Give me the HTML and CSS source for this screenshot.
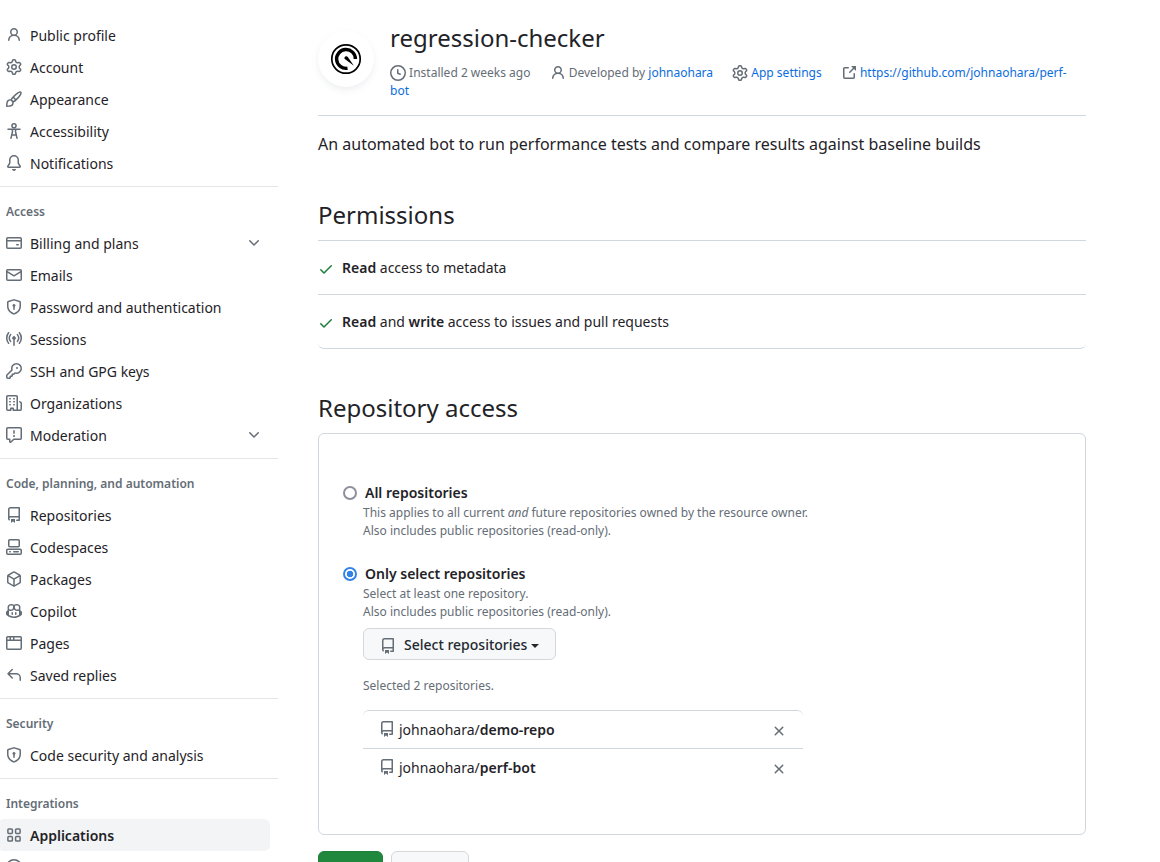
FILE: index.html
```html
<!DOCTYPE html>
<html lang="en">
<head>
<meta charset="utf-8">
<title>Installed GitHub App - regression-checker</title>
<link rel="stylesheet" href="styles.css">
</head>
<body>
<svg class="sprite" aria-hidden="true">
  <symbol id="person" viewBox="0 0 16 16"><path d="M10.561 8.073a6.005 6.005 0 0 1 3.432 5.142.75.75 0 1 1-1.498.07 4.5 4.5 0 0 0-8.99 0 .75.75 0 0 1-1.498-.07 6.004 6.004 0 0 1 3.431-5.142 3.999 3.999 0 1 1 5.123 0ZM10.5 5a2.5 2.5 0 1 0-5 0 2.5 2.5 0 0 0 5 0Z"/></symbol>
  <symbol id="gear" viewBox="0 0 16 16"><path d="M8 0a8.2 8.2 0 0 1 .701.031C9.444.095 9.99.645 10.16 1.29l.288 1.107c.018.066.079.158.212.224.231.114.454.243.668.386.123.082.233.09.299.071l1.103-.303c.644-.176 1.392.021 1.82.63.27.385.506.792.704 1.218.315.675.111 1.422-.364 1.891l-.814.806c-.049.048-.098.147-.088.294.016.257.016.515 0 .772-.01.147.038.246.088.294l.814.806c.475.469.679 1.216.364 1.891a7.977 7.977 0 0 1-.704 1.217c-.428.61-1.176.807-1.82.63l-1.102-.302c-.067-.019-.177-.011-.3.071a5.909 5.909 0 0 1-.668.386c-.133.066-.194.158-.211.224l-.29 1.106c-.168.646-.715 1.196-1.458 1.26a8.006 8.006 0 0 1-1.402 0c-.743-.064-1.289-.614-1.458-1.26l-.289-1.106c-.018-.066-.079-.158-.212-.224a5.738 5.738 0 0 1-.668-.386c-.123-.082-.233-.09-.299-.071l-1.103.303c-.644.176-1.392-.021-1.82-.63a8.12 8.12 0 0 1-.704-1.218c-.315-.675-.111-1.422.363-1.891l.815-.806c.05-.048.098-.147.088-.294a6.214 6.214 0 0 1 0-.772c.01-.147-.038-.246-.088-.294l-.815-.806C.635 6.045.431 5.298.746 4.623a7.92 7.92 0 0 1 .704-1.217c.428-.61 1.176-.807 1.82-.63l1.102.302c.067.019.177.011.3-.071.214-.143.437-.272.668-.386.133-.066.194-.158.211-.224l.29-1.106C6.009.645 6.556.095 7.299.03 7.53.01 7.764 0 8 0Zm-.571 1.525c-.036.003-.108.036-.137.146l-.289 1.105c-.147.561-.549.967-.998 1.189-.173.086-.34.183-.5.29-.417.278-.97.423-1.529.27l-1.103-.303c-.109-.03-.175.016-.195.045-.22.312-.412.644-.573.99-.014.031-.021.11.059.19l.815.806c.411.406.562.957.53 1.456a4.709 4.709 0 0 0 0 .582c.032.499-.119 1.05-.53 1.456l-.815.806c-.081.08-.073.159-.059.19.162.346.353.677.573.989.02.03.085.076.195.046l1.102-.303c.56-.153 1.113-.008 1.53.27.161.107.328.204.501.29.447.222.85.629.997 1.189l.289 1.105c.029.109.101.143.137.146a6.6 6.6 0 0 0 1.142 0c.036-.003.108-.036.137-.146l.289-1.105c.147-.561.549-.967.998-1.189.173-.086.34-.183.5-.29.417-.278.97-.423 1.529-.27l1.103.303c.109.029.175-.016.195-.045.22-.313.411-.644.573-.99.014-.031.021-.11-.059-.19l-.815-.806c-.411-.406-.562-.957-.53-1.456a4.709 4.709 0 0 0 0-.582c-.032-.499.119-1.05.53-1.456l.815-.806c.081-.08.073-.159.059-.19a6.464 6.464 0 0 0-.573-.989c-.02-.03-.085-.076-.195-.046l-1.102.303c-.56.153-1.113.008-1.53-.27a4.44 4.44 0 0 0-.501-.29c-.447-.222-.85-.629-.997-1.189l-.289-1.105c-.029-.11-.101-.143-.137-.146a6.6 6.6 0 0 0-1.142 0ZM11 8a3 3 0 1 1-6 0 3 3 0 0 1 6 0ZM9.5 8a1.5 1.5 0 1 0-3.001.001A1.5 1.5 0 0 0 9.5 8Z"/></symbol>
  <symbol id="paintbrush" viewBox="0 0 16 16"><path d="M11.134 1.535c.7-.509 1.416-.942 2.076-1.155.649-.21 1.463-.267 2.069.34.603.601.568 1.411.368 2.07-.202.668-.624 1.39-1.125 2.096-1.011 1.424-2.496 2.987-3.775 4.249-1.098 1.084-2.132 1.839-3.04 2.3a3.744 3.744 0 0 1-1.055 3.217c-.431.431-1.065.691-1.657.861-.614.177-1.294.287-1.914.357A21.151 21.151 0 0 1 .797 16H.743a.75.75 0 0 1-.743-.742v-.054a21.25 21.25 0 0 1 .13-2.284c.067-.647.187-1.287.358-1.914.17-.591.43-1.226.86-1.657a3.746 3.746 0 0 1 3.227-1.054c.466-.893 1.225-1.907 2.314-2.982 1.271-1.255 2.833-2.75 4.245-3.777ZM1.62 13.089c-.051.464-.086.929-.104 1.395.466-.018.932-.053 1.396-.104a10.511 10.511 0 0 0 1.668-.309c.526-.151.856-.325 1.011-.48a2.25 2.25 0 1 0-3.182-3.182c-.155.155-.329.485-.48 1.01a10.515 10.515 0 0 0-.309 1.67Zm10.396-10.34c-1.224.89-2.605 2.189-3.822 3.384l1.718 1.718c1.21-1.205 2.51-2.597 3.387-3.833.47-.662.78-1.227.912-1.662.134-.444.032-.551.009-.575h-.001V1.78c-.014-.014-.113-.113-.548.027-.432.14-.995.462-1.655.942Zm-4.832 7.266-.001.001a9.859 9.859 0 0 0 1.63-1.142L7.155 7.216a9.7 9.7 0 0 0-1.161 1.607c.482.302.889.71 1.19 1.192Z"/></symbol>
  <symbol id="accessibility" viewBox="0 0 16 16"><g class="line"><circle cx="8" cy="2.8" r="2.05"/><path d="M2 6.2h3.3c.7 0 1.2.5 1.2 1.2v1.1L5 15.2M14 6.2h-3.3c-.7 0-1.2.5-1.2 1.2v1.1l1.5 6.7M5.7 12h4.6M6 6.2h4"/></g></symbol>
  <symbol id="bell" viewBox="0 0 16 16"><path d="M8 16a2 2 0 0 0 1.985-1.75c.017-.137-.097-.25-.235-.25h-3.5c-.138 0-.252.113-.235.25A2 2 0 0 0 8 16ZM3 5a5 5 0 0 1 10 0v2.947c0 .05.015.098.042.139l1.703 2.555A1.519 1.519 0 0 1 13.482 13H2.518a1.516 1.516 0 0 1-1.263-2.36l1.703-2.554A.255.255 0 0 0 3 7.947Zm5-3.5A3.5 3.5 0 0 0 4.5 5v2.947c0 .346-.102.683-.294.97l-1.703 2.556a.017.017 0 0 0-.003.01l.001.006c0 .002.002.004.004.006l.006.004.007.001h10.964l.007-.001.006-.004.004-.006.001-.007a.017.017 0 0 0-.003-.01l-1.703-2.554a1.745 1.745 0 0 1-.294-.97V5A3.5 3.5 0 0 0 8 1.5Z"/></symbol>
  <symbol id="card" viewBox="0 0 16 16"><path d="M10.75 9a.75.75 0 0 0 0 1.5h1.5a.75.75 0 0 0 0-1.5h-1.5Z"/><path d="M0 3.75C0 2.784.784 2 1.75 2h12.5c.966 0 1.75.784 1.75 1.75v8.5A1.75 1.75 0 0 1 14.25 14H1.75A1.75 1.75 0 0 1 0 12.25ZM14.5 6.5h-13v5.75c0 .138.112.25.25.25h12.5a.25.25 0 0 0 .25-.25Zm0-2.75a.25.25 0 0 0-.25-.25H1.75a.25.25 0 0 0-.25.25V5h13Z"/></symbol>
  <symbol id="mail" viewBox="0 0 16 16"><path d="M1.75 2h12.5c.966 0 1.75.784 1.75 1.75v8.5A1.75 1.75 0 0 1 14.25 14H1.75A1.75 1.75 0 0 1 0 12.25v-8.5C0 2.784.784 2 1.75 2ZM1.5 12.251c0 .138.112.25.25.25h12.5a.25.25 0 0 0 .25-.25V5.809L8.38 9.397a.75.75 0 0 1-.76 0L1.5 5.809v6.442Zm13-8.181v-.32a.25.25 0 0 0-.25-.25H1.75a.25.25 0 0 0-.25.25v.32L8 7.88Z"/></symbol>
  <symbol id="shield" viewBox="0 0 16 16"><path d="m8.533.133 5.25 1.68A1.75 1.75 0 0 1 15 3.48V7c0 1.566-.32 3.182-1.303 4.682-.983 1.498-2.585 2.813-5.032 3.855a1.697 1.697 0 0 1-1.33 0c-2.447-1.042-4.049-2.357-5.032-3.855C1.32 10.182 1 8.566 1 7V3.48a1.75 1.75 0 0 1 1.217-1.667l5.25-1.68a1.748 1.748 0 0 1 1.066 0Zm-.61 1.429.001.001-5.25 1.68a.251.251 0 0 0-.174.237V7c0 1.36.275 2.666 1.057 3.859.784 1.194 2.121 2.342 4.366 3.298a.196.196 0 0 0 .154 0c2.245-.957 3.582-2.103 4.366-3.297C13.225 9.666 13.5 8.358 13.5 7V3.48a.25.25 0 0 0-.174-.238l-5.25-1.68a.25.25 0 0 0-.153 0ZM9.5 6.5c0 .536-.286 1.032-.75 1.3v2.45a.75.75 0 0 1-1.5 0V7.8A1.5 1.5 0 1 1 9.5 6.5Z"/></symbol>
  <symbol id="broadcast" viewBox="0 0 16 16"><path d="M8.75 8.582v5.668a.75.75 0 0 1-1.5 0V8.582a1.75 1.75 0 1 1 1.5 0Z"/><g class="line"><path d="M4.6 3.6c-1.5 1.9-1.5 4.9 0 6.8M11.4 3.6c1.5 1.9 1.5 4.9 0 6.8M2.6 1.7c-2.5 3-2.5 7.6 0 10.6M13.4 1.7c2.5 3 2.5 7.6 0 10.6"/></g></symbol>
  <symbol id="key" viewBox="0 0 16 16"><path d="M10.5 0a5.499 5.499 0 1 1-1.288 10.848l-.932.932a.749.749 0 0 1-.53.22H7v.75a.749.749 0 0 1-.22.53l-.5.5a.749.749 0 0 1-.53.22H5v.75a.749.749 0 0 1-.22.53l-.5.5a.749.749 0 0 1-.53.22h-2A1.75 1.75 0 0 1 0 14.25v-2c0-.199.079-.389.22-.53l4.932-4.932A5.5 5.5 0 0 1 10.5 0Zm-4 5.5c-.001.431.069.86.205 1.269a.75.75 0 0 1-.181.768L1.5 12.56v1.69c0 .138.112.25.25.25h1.69l.06-.06v-1.19a.75.75 0 0 1 .75-.75h1.19l.06-.06v-1.19a.75.75 0 0 1 .75-.75h1.19l1.023-1.025a.75.75 0 0 1 .768-.18A4 4 0 1 0 6.5 5.5ZM11 6a1 1 0 1 1 0-2 1 1 0 0 1 0 2Z"/></symbol>
  <symbol id="organization" viewBox="0 0 16 16"><path d="M1.75 16A1.75 1.75 0 0 1 0 14.25V1.75C0 .784.784 0 1.75 0h8.5C11.216 0 12 .784 12 1.75v12.5c0 .085-.006.168-.018.25h2.268a.25.25 0 0 0 .25-.25V8.285a.25.25 0 0 0-.111-.208l-1.055-.703a.749.749 0 1 1 .832-1.248l1.055.703c.487.325.779.871.779 1.456v5.965A1.75 1.75 0 0 1 14.25 16h-3.5a.766.766 0 0 1-.197-.026c-.099.017-.2.026-.303.026h-3a.75.75 0 0 1-.75-.75V14h-1v1.25a.75.75 0 0 1-.75.75Zm-.25-1.75c0 .138.112.25.25.25H4v-1.25a.75.75 0 0 1 .75-.75h2.5a.75.75 0 0 1 .75.75v1.25h2.25a.25.25 0 0 0 .25-.25V1.75a.25.25 0 0 0-.25-.25h-8.5a.25.25 0 0 0-.25.25ZM3.75 6h.5a.75.75 0 0 1 0 1.5h-.5a.75.75 0 0 1 0-1.5ZM3 3.75A.75.75 0 0 1 3.75 3h.5a.75.75 0 0 1 0 1.5h-.5A.75.75 0 0 1 3 3.75Zm4 3A.75.75 0 0 1 7.75 6h.5a.75.75 0 0 1 0 1.5h-.5A.75.75 0 0 1 7 6.75ZM7.75 3h.5a.75.75 0 0 1 0 1.5h-.5a.75.75 0 0 1 0-1.5ZM3 9.75A.75.75 0 0 1 3.75 9h.5a.75.75 0 0 1 0 1.5h-.5A.75.75 0 0 1 3 9.75ZM7.75 9h.5a.75.75 0 0 1 0 1.5h-.5a.75.75 0 0 1 0-1.5Z"/></symbol>
  <symbol id="report" viewBox="0 0 16 16"><path d="M0 1.75C0 .784.784 0 1.75 0h12.5C15.216 0 16 .784 16 1.75v9.5A1.75 1.75 0 0 1 14.25 13H8.06l-2.573 2.573A1.458 1.458 0 0 1 3 14.543V13H1.75A1.75 1.75 0 0 1 0 11.25Zm1.75-.25a.25.25 0 0 0-.25.25v9.5c0 .138.112.25.25.25h2a.75.75 0 0 1 .75.75v2.19l2.72-2.72a.749.749 0 0 1 .53-.22h6.5a.25.25 0 0 0 .25-.25v-9.5a.25.25 0 0 0-.25-.25Zm7 2.25v2.5a.75.75 0 0 1-1.5 0v-2.5a.75.75 0 0 1 1.5 0ZM9 9a1 1 0 1 1-2 0 1 1 0 0 1 2 0Z"/></symbol>
  <symbol id="repo" viewBox="0 0 16 16"><path d="M2 2.5A2.5 2.5 0 0 1 4.5 0h8.75a.75.75 0 0 1 .75.75v12.5a.75.75 0 0 1-.75.75h-2.5a.75.75 0 0 1 0-1.5h1.75v-2h-8a1 1 0 0 0-.714 1.7.75.75 0 1 1-1.072 1.05A2.495 2.495 0 0 1 2 11.5Zm10.5-1h-8a1 1 0 0 0-1 1v6.708A2.486 2.486 0 0 1 4.5 9h8ZM5 12.25a.25.25 0 0 1 .25-.25h3.5a.25.25 0 0 1 .25.25v3.25a.25.25 0 0 1-.4.2l-1.45-1.087a.249.249 0 0 0-.3 0L5.4 15.7a.25.25 0 0 1-.4-.2Z"/></symbol>
  <symbol id="codespaces" viewBox="0 0 16 16"><path d="M0 11.25c0-.966.784-1.75 1.75-1.75h12.5c.966 0 1.75.784 1.75 1.75v3A1.75 1.75 0 0 1 14.25 16H1.75A1.75 1.75 0 0 1 0 14.25Zm2-9.5C2 .784 2.784 0 3.75 0h8.5C13.216 0 14 .784 14 1.75v5a1.75 1.75 0 0 1-1.75 1.75h-8.5A1.75 1.75 0 0 1 2 6.75Zm1.75-.25a.25.25 0 0 0-.25.25v5c0 .138.112.25.25.25h8.5a.25.25 0 0 0 .25-.25v-5a.25.25 0 0 0-.25-.25Zm-2 9.5a.25.25 0 0 0-.25.25v3c0 .138.112.25.25.25h12.5a.25.25 0 0 0 .25-.25v-3a.25.25 0 0 0-.25-.25Z"/><path d="M7 12.75a.75.75 0 0 1 .75-.75h4.5a.75.75 0 0 1 0 1.5h-4.5a.75.75 0 0 1-.75-.75Zm-4 0a.75.75 0 0 1 .75-.75h.5a.75.75 0 0 1 0 1.5h-.5a.75.75 0 0 1-.75-.75Z"/></symbol>
  <symbol id="package" viewBox="0 0 16 16"><path d="m8.878.392 5.25 3.045c.54.314.872.89.872 1.514v6.098a1.75 1.75 0 0 1-.872 1.514l-5.25 3.045a1.75 1.75 0 0 1-1.756 0l-5.25-3.045A1.75 1.75 0 0 1 1 11.049V4.951c0-.624.332-1.201.872-1.514L7.122.392a1.75 1.75 0 0 1 1.756 0ZM7.875 1.69l-4.63 2.685L8 7.133l4.755-2.758-4.63-2.685a.248.248 0 0 0-.25 0ZM2.5 5.677v5.372c0 .09.047.171.125.216l4.625 2.683V8.432Zm6.25 8.271 4.625-2.683a.25.25 0 0 0 .125-.216V5.677L8.75 8.432Z"/></symbol>
  <symbol id="copilot" viewBox="0 0 16 16"><path d="M7.998 15.035c-4.562 0-7.873-2.914-7.998-3.749V9.338c.085-.628.677-1.686 1.588-2.065.013-.07.024-.143.036-.218.029-.183.06-.384.126-.612-.201-.508-.254-1.084-.254-1.656 0-.87.128-1.769.693-2.484.579-.733 1.494-1.124 2.724-1.261 1.206-.134 2.262.034 2.944.765.05.053.096.108.139.165.044-.057.094-.112.143-.165.682-.731 1.738-.899 2.944-.765 1.23.137 2.145.528 2.724 1.261.566.715.693 1.614.693 2.484 0 .572-.053 1.148-.254 1.656.066.228.098.429.126.612.012.076.024.148.037.218.924.385 1.522 1.471 1.591 2.095v1.872c0 .766-3.351 3.795-8.002 3.795Zm0-1.485c2.28 0 4.584-1.11 5.002-1.433V7.862l-.023-.116c-.49.21-1.075.291-1.727.291-1.146 0-2.059-.327-2.71-.991A3.222 3.222 0 0 1 8 6.303a3.24 3.24 0 0 1-.544.743c-.65.664-1.563.991-2.71.991-.652 0-1.236-.081-1.727-.291l-.023.116v4.255c.419.323 2.722 1.433 5.002 1.433ZM6.762 2.83c-.193-.206-.637-.413-1.682-.297-1.019.113-1.479.404-1.713.7-.247.312-.369.789-.369 1.554 0 .793.129 1.171.308 1.371.162.181.519.379 1.442.379.853 0 1.339-.235 1.638-.54.315-.322.527-.827.617-1.553.117-.935-.037-1.395-.241-1.614Zm4.155-.297c-1.044-.116-1.488.091-1.681.297-.204.219-.359.679-.242 1.614.091.726.303 1.231.618 1.553.299.305.784.54 1.638.54.922 0 1.28-.198 1.442-.379.179-.2.308-.578.308-1.371 0-.765-.123-1.242-.37-1.554-.233-.296-.693-.587-1.713-.7Z"/><path d="M6.25 9.037a.75.75 0 0 1 .75.75v1.501a.75.75 0 0 1-1.5 0V9.787a.75.75 0 0 1 .75-.75Zm4.25.75v1.501a.75.75 0 0 1-1.5 0V9.787a.75.75 0 0 1 1.5 0Z"/></symbol>
  <symbol id="browser" viewBox="0 0 16 16"><path d="M0 2.75C0 1.784.784 1 1.75 1h12.5c.966 0 1.75.784 1.75 1.75v10.5A1.75 1.75 0 0 1 14.25 15H1.75A1.75 1.75 0 0 1 0 13.25ZM14.5 6h-13v7.25c0 .138.112.25.25.25h12.5a.25.25 0 0 0 .25-.25Zm-6-3.5v2h6V2.75a.25.25 0 0 0-.25-.25ZM5 2.5v2h2v-2Zm-3.25 0a.25.25 0 0 0-.25.25V4.5h2v-2Z"/></symbol>
  <symbol id="reply" viewBox="0 0 16 16"><path d="M6.78 1.97a.75.75 0 0 1 0 1.06L3.81 6h6.44A4.75 4.75 0 0 1 15 10.75v2.5a.75.75 0 0 1-1.5 0v-2.5a3.25 3.25 0 0 0-3.25-3.25H3.81l2.97 2.97a.749.749 0 1 1-1.06 1.06L1.47 7.28a.75.75 0 0 1 0-1.06l4.25-4.25a.75.75 0 0 1 1.06 0Z"/></symbol>
  <symbol id="apps" viewBox="0 0 16 16"><g class="line"><rect x="1.9" y="1.9" width="4.5" height="4.5" rx=".9"/><rect x="9.6" y="1.9" width="4.5" height="4.5" rx=".9"/><rect x="1.9" y="9.6" width="4.5" height="4.5" rx=".9"/><rect x="9.6" y="9.6" width="4.5" height="4.5" rx=".9"/></g></symbol>
  <symbol id="clock" viewBox="0 0 16 16"><path d="M8 0a8 8 0 1 1 0 16A8 8 0 0 1 8 0ZM1.5 8a6.5 6.5 0 1 0 13 0 6.5 6.5 0 0 0-13 0Zm7-3.25v2.992l2.028.812a.75.75 0 0 1-.557 1.392l-2.5-1A.751.751 0 0 1 7 8.25v-3.5a.75.75 0 0 1 1.5 0Z"/></symbol>
  <symbol id="external" viewBox="0 0 16 16"><path d="M3.75 2h3.5a.75.75 0 0 1 0 1.5h-3.5a.25.25 0 0 0-.25.25v8.5c0 .138.112.25.25.25h8.5a.25.25 0 0 0 .25-.25v-3.5a.75.75 0 0 1 1.5 0v3.5A1.75 1.75 0 0 1 12.25 14h-8.5A1.75 1.75 0 0 1 2 12.25v-8.5C2 2.784 2.784 2 3.75 2Zm6.854-1h4.146a.25.25 0 0 1 .25.25v4.146a.25.25 0 0 1-.427.177L13.03 4.03 9.28 7.78a.751.751 0 0 1-1.06-1.06l3.75-3.75-1.543-1.543A.25.25 0 0 1 10.604 1Z"/></symbol>
  <symbol id="check" viewBox="0 0 16 16"><path d="M13.78 4.22a.75.75 0 0 1 0 1.06l-7.25 7.25a.75.75 0 0 1-1.06 0L2.22 9.28a.751.751 0 0 1 1.06-1.06L6 10.94l6.72-6.72a.75.75 0 0 1 1.06 0Z"/></symbol>
  <symbol id="cross" viewBox="0 0 16 16"><path d="M3.72 3.72a.75.75 0 0 1 1.06 0L8 6.94l3.22-3.22a.749.749 0 1 1 1.06 1.06L9.06 8l3.22 3.22a.749.749 0 1 1-1.06 1.06L8 9.06l-3.22 3.22a.749.749 0 1 1-1.06-1.06L6.94 8 3.72 4.78a.75.75 0 0 1 0-1.06Z"/></symbol>
  <symbol id="chevron" viewBox="0 0 16 16"><path d="M12.78 5.22a.749.749 0 0 1 0 1.06l-4.25 4.25a.749.749 0 0 1-1.06 0L3.22 6.28a.749.749 0 1 1 1.06-1.06L8 8.939l3.72-3.719a.749.749 0 0 1 1.06 0Z"/></symbol>
</svg>
<div class="layout">
  <nav class="sidebar">
    <ul class="nav-group">
      <li class="nav-item"><svg class="icon"><use href="#person"/></svg><span>Public profile</span></li>
      <li class="nav-item"><svg class="icon"><use href="#gear"/></svg><span>Account</span></li>
      <li class="nav-item"><svg class="icon"><use href="#paintbrush"/></svg><span>Appearance</span></li>
      <li class="nav-item"><svg class="icon"><use href="#accessibility"/></svg><span>Accessibility</span></li>
      <li class="nav-item"><svg class="icon"><use href="#bell"/></svg><span>Notifications</span></li>
    </ul>
    <h3 class="nav-title">Access</h3>
    <ul class="nav-group">
      <li class="nav-item"><svg class="icon"><use href="#card"/></svg><span>Billing and plans</span><svg class="icon chevron"><use href="#chevron"/></svg></li>
      <li class="nav-item"><svg class="icon"><use href="#mail"/></svg><span>Emails</span></li>
      <li class="nav-item"><svg class="icon"><use href="#shield"/></svg><span>Password and authentication</span></li>
      <li class="nav-item"><svg class="icon"><use href="#broadcast"/></svg><span>Sessions</span></li>
      <li class="nav-item"><svg class="icon"><use href="#key"/></svg><span>SSH and GPG keys</span></li>
      <li class="nav-item"><svg class="icon"><use href="#organization"/></svg><span>Organizations</span></li>
      <li class="nav-item"><svg class="icon"><use href="#report"/></svg><span>Moderation</span><svg class="icon chevron"><use href="#chevron"/></svg></li>
    </ul>
    <h3 class="nav-title">Code, planning, and automation</h3>
    <ul class="nav-group">
      <li class="nav-item"><svg class="icon"><use href="#repo"/></svg><span>Repositories</span></li>
      <li class="nav-item"><svg class="icon"><use href="#codespaces"/></svg><span>Codespaces</span></li>
      <li class="nav-item"><svg class="icon"><use href="#package"/></svg><span>Packages</span></li>
      <li class="nav-item"><svg class="icon"><use href="#copilot"/></svg><span>Copilot</span></li>
      <li class="nav-item"><svg class="icon"><use href="#browser"/></svg><span>Pages</span></li>
      <li class="nav-item"><svg class="icon"><use href="#reply"/></svg><span>Saved replies</span></li>
    </ul>
    <h3 class="nav-title">Security</h3>
    <ul class="nav-group">
      <li class="nav-item"><svg class="icon"><use href="#shield"/></svg><span>Code security and analysis</span></li>
    </ul>
    <h3 class="nav-title">Integrations</h3>
    <ul class="nav-group">
      <li class="nav-item active"><svg class="icon"><use href="#apps"/></svg><span>Applications</span></li>
      <li class="nav-item"><svg class="icon"><use href="#clock"/></svg></li>
    </ul>
  </nav>

  <main class="main">
    <header class="app-header">
      <div class="avatar">
        <svg class="logo" viewBox="0 0 32 32"><circle cx="16" cy="16" r="14.2" fill="none" stroke="#000" stroke-width="1.7"/><path d="M17.5 25.2A9.4 9.4 0 1 1 25.4 16" fill="none" stroke="#000" stroke-width="3.4"/><path d="M14.6 14.2a1.9 1.9 0 0 1 3.2-.2l6.1 8.7-8.4-6.1a1.8 1.8 0 0 1-.9-2.4Z"/></svg>
      </div>
      <div class="app-info">
        <h1 class="app-name">regression-checker</h1>
        <p class="meta">
          <span class="meta-item"><svg class="icon"><use href="#clock"/></svg> Installed 2 weeks ago</span>
          <span class="meta-item"><svg class="icon"><use href="#person"/></svg> Developed by <a href="#">johnaohara</a></span>
          <span class="meta-item"><svg class="icon"><use href="#gear"/></svg> <a href="#">App settings</a></span>
          <span class="meta-item"><svg class="icon"><use href="#external"/></svg> <a href="#">https://github.com/johnaohara/perf-bot</a></span>
        </p>
      </div>
    </header>
    <p class="lead">An automated bot to run performance tests and compare results against baseline builds</p>

    <h2 class="section-title">Permissions</h2>
    <ul class="permissions">
      <li><svg class="icon check"><use href="#check"/></svg><span><b>Read</b> access to metadata</span></li>
      <li><svg class="icon check"><use href="#check"/></svg><span><b>Read</b> and <b>write</b> access to issues and pull requests</span></li>
    </ul>

    <h2 class="section-title">Repository access</h2>
    <section class="access-box">
      <label class="choice"><span class="radio"></span>All repositories</label>
      <p class="note">This applies to all current <em>and</em> future repositories owned by the resource owner.<br>Also includes public repositories (read-only).</p>
      <label class="choice second"><span class="radio checked"></span>Only select repositories</label>
      <p class="note">Select at least one repository.<br>Also includes public repositories (read-only).</p>
      <button class="btn select-btn"><svg class="icon"><use href="#repo"/></svg><span>Select repositories</span><i class="caret"></i></button>
      <p class="note selected">Selected 2 repositories.</p>
      <ul class="repos">
        <li><svg class="icon"><use href="#repo"/></svg><span>johnaohara/<b>demo-repo</b></span><svg class="icon remove"><use href="#cross"/></svg></li>
        <li><svg class="icon"><use href="#repo"/></svg><span>johnaohara/<b>perf-bot</b></span><svg class="icon remove"><use href="#cross"/></svg></li>
      </ul>
    </section>
    <div class="actions">
      <button class="btn primary" aria-label="Save"></button>
      <button class="btn cancel" aria-label="Cancel"></button>
    </div>
  </main>
</div>
</body>
</html>
```
FILE: styles.css
```css
* { box-sizing: border-box; }
body {
  margin: 0;
  height: 862px;
  overflow: hidden;
  background: #fff;
  color: #1f2328;
  font: 14px/21px "Noto Sans", sans-serif;
}
h1, h2, h3, p, ul { margin: 0; padding: 0; font-weight: 400; }
ul { list-style: none; }
b { font-weight: 600; }
a { color: #0a6ddd; text-decoration: none; }
.sprite { display: none; }
.icon { width: 16px; height: 16px; flex: none; fill: #656d76; color: #656d76; }
.line { fill: none; stroke: currentColor; stroke-width: 1.5; stroke-linecap: round; stroke-linejoin: round; }
.layout { display: flex; height: 862px; overflow: hidden; }

.sidebar { width: 278px; padding-top: 19px; flex: none; }
.nav-item {
  display: flex;
  align-items: center;
  gap: 8px;
  height: 32px;
  width: 272px;
  margin-left: -2px;
  padding: 0 8px;
  border-radius: 6px;
}
.nav-item span { padding-top: 1px; }
.nav-item.active { background: #f3f4f6; font-weight: 600; }
.chevron { margin-left: auto; }
.nav-title {
  height: 41px;
  margin-top: 7px;
  padding: 16px 0 0 6px;
  border-top: 1px solid #e4e6e9;
  color: #656d76;
  font-size: 12px;
  line-height: 18px;
  font-weight: 600;
}

.main { width: 768px; margin-left: 40px; flex: none; }
.app-header { display: flex; gap: 16px; height: 116px; border-bottom: 1px solid #d0d7de; }
.avatar {
  display: flex;
  align-items: center;
  justify-content: center;
  width: 56px;
  height: 56px;
  margin-top: 31px;
  border-radius: 50%;
  background: #fff;
  box-shadow: 0 3px 6px rgba(140, 149, 159, .15);
}
.logo { width: 32px; height: 32px; }
.app-info { width: 696px; padding-top: 20px; }
.app-name { font-size: 24px; line-height: 36px; }
.meta { margin-top: 8px; color: #656d76; font-size: 12px; line-height: 18px; }
.meta-item { margin-right: 16px; }
.meta-item .icon { vertical-align: text-bottom; }
.lead { margin-top: 16px; font-size: 16px; line-height: 24px; }
.section-title { margin-top: 41px; font-size: 24px; line-height: 36px; }

.permissions { margin-top: 7px; border-bottom: 1px solid #d0d7de; border-radius: 0 0 6px 6px; }
.permissions li { display: flex; gap: 8px; height: 54px; padding-top: 16px; border-top: 1px solid #d0d7de; }
.permissions .check { margin-top: 4px; fill: #1a7f37; }

.access-box { height: 402px; margin-top: 7px; padding: 48px 24px 0; border: 1px solid #d0d7de; border-radius: 6px; }
.choice { display: flex; align-items: center; gap: 8px; height: 21px; font-weight: 600; }
.choice.second { margin-top: 23px; }
.radio { width: 14px; height: 14px; border: 2px solid #8f8f9d; border-radius: 50%; }
.radio.checked { border-color: #3584e4; background: radial-gradient(circle, #3584e4 3px, #fff 3.6px); }
.note { margin: 1px 0 0 20px; color: #656d76; font-size: 12px; line-height: 18px; }
.btn { border: 1px solid #d5d8da; border-radius: 6px; background: #f6f8fa; font: 500 14px/20px "Noto Sans", sans-serif; color: #24292f; padding: 0; }
.select-btn { display: flex; align-items: center; width: 193px; height: 32px; margin: 7px 0 0 20px; padding-left: 16px; }
.select-btn .icon { margin-top: 3px; }
.select-btn span { margin-left: 8px; padding-top: 2px; }
.caret { margin: 4px 0 0 4px; border: 4px solid transparent; border-top-color: #24292f; border-bottom: 0; }
.selected { margin-top: 17px; }
.repos { width: 440px; margin: 15px 0 0 20px; }
.repos li { display: flex; height: 38px; padding: 8px 16px 0; border-top: 1px solid #d0d7de; }
.repos li:first-child { border-radius: 6px 6px 0 0; }
.repos li span { margin-left: 4px; }
.repos .icon { margin-top: 2px; }
.repos .remove { margin: 4px 0 0 auto; }

.actions { display: flex; gap: 8px; margin-top: 16px; }
.primary { width: 65px; height: 32px; background: #1f883d; border-color: #1f803a; }
.cancel { width: 78px; height: 32px; }
```
